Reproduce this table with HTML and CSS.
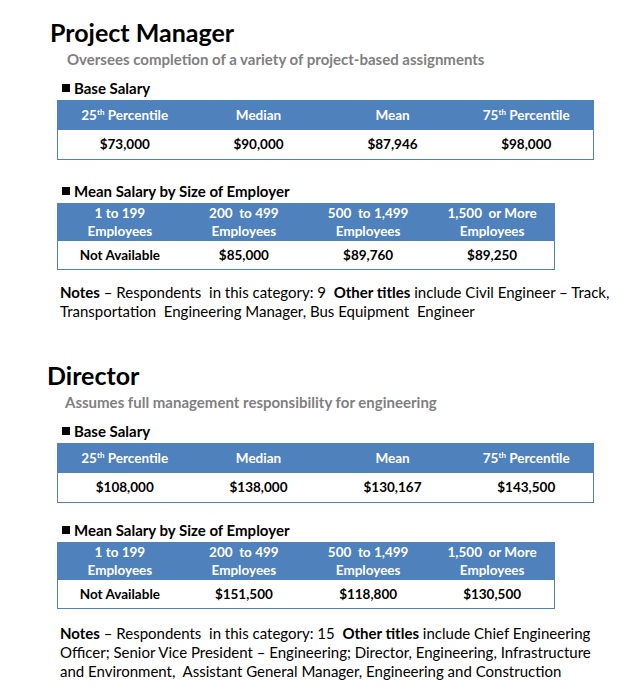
FILE: index.html
```html
<!DOCTYPE html>
<html>
<head>
<meta charset="utf-8">
<link rel="stylesheet" href="styles.css">
</head>
<body>
<div class="page">
  <section class="job job-pm">
    <h1 class="title">Project Manager</h1>
    <p class="subtitle">Oversees completion of a variety of project-based assignments</p>
    <h2 class="label"><span class="sq"></span>Base Salary</h2>
    <table class="tbl tbl-wide">
      <tr class="head"><th>25<sup>th</sup> Percentile</th><th>Median</th><th>Mean</th><th>75<sup>th</sup> Percentile</th></tr>
      <tr><td>$73,000</td><td>$90,000</td><td>$87,946</td><td>$98,000</td></tr>
    </table>
    <h2 class="label label-2"><span class="sq"></span>Mean Salary by Size of Employer</h2>
    <table class="tbl tbl-narrow">
      <tr class="head"><th>1 to 199<br>Employees</th><th>200&nbsp; to 499<br>Employees</th><th>500&nbsp; to 1,499<br>Employees</th><th>1,500&nbsp; or More<br>Employees</th></tr>
      <tr><td>Not Available</td><td>$85,000</td><td>$89,760</td><td>$89,250</td></tr>
    </table>
    <p class="notes"><b>Notes</b> – Respondents&nbsp; in this category: 9&nbsp; <b>Other titles</b> include Civil Engineer – Track, Transportation&nbsp; Engineering Manager, Bus Equipment&nbsp; Engineer</p>
  </section>

  <section class="job job-dir">
    <h1 class="title">Director</h1>
    <p class="subtitle">Assumes full management responsibility for engineering</p>
    <h2 class="label"><span class="sq"></span>Base Salary</h2>
    <table class="tbl tbl-wide">
      <tr class="head"><th>25<sup>th</sup> Percentile</th><th>Median</th><th>Mean</th><th>75<sup>th</sup> Percentile</th></tr>
      <tr><td>$108,000</td><td>$138,000</td><td>$130,167</td><td>$143,500</td></tr>
    </table>
    <h2 class="label label-2"><span class="sq"></span>Mean Salary by Size of Employer</h2>
    <table class="tbl tbl-narrow">
      <tr class="head"><th>1 to 199<br>Employees</th><th>200&nbsp; to 499<br>Employees</th><th>500&nbsp; to 1,499<br>Employees</th><th>1,500&nbsp; or More<br>Employees</th></tr>
      <tr><td>Not Available</td><td>$151,500</td><td>$118,800</td><td>$130,500</td></tr>
    </table>
    <p class="notes"><b>Notes</b> – Respondents&nbsp; in this category: 15&nbsp; <b>Other titles</b> include Chief Engineering Officer; Senior Vice President – Engineering; Director, Engineering, Infrastructure and Environment,&nbsp; Assistant General Manager, Engineering and Construction</p>
  </section>
</div>
</body>
</html>
```

FILE: styles.css
```css
* { box-sizing: border-box; }
html, body { margin: 0; padding: 0; background: #fff; }
body { font-family: Lato, "Open Sans", sans-serif; color: #000; }
.page { width: 640px; padding: 0; }
.job { padding-left: 57px; }
.job-pm { padding-top: 17px; }
.job-dir { padding-top: 39px; }
.title { margin: 0 0 0 -7px; font-size: 25px; font-weight: 700; line-height: 30px; }
.job-dir .title { margin-left: -10px; }
.subtitle { margin: 3px 0 0 10px; font-size: 15px; font-weight: 700; color: #7f7f7f; line-height: 18px; }
.job-dir .subtitle { margin-left: 8px; }
.label { margin: 11px 0 0 5px; font-size: 15px; font-weight: 700; line-height: 18px; display: flex; align-items: center; }
.label-2 { margin-top: 22px; }
.job-dir .label-2 { margin-top: 18px; }
.sq { display: inline-block; width: 8px; height: 8px; background: #000; margin-right: 4px; }
.tbl { border-collapse: collapse; table-layout: fixed; margin-top: 3px; border: 1px solid #4f81bd; }
.tbl-wide { width: 537px; }
.tbl-narrow { width: 498px; }
.tbl th { background: #4f81bd; color: #fff; font-weight: 700; font-size: 13.5px; text-align: center; padding: 0; }
.tbl td { font-weight: 700; font-size: 13.5px; text-align: center; padding: 0; background: #fff; }
.tbl-wide th { height: 29px; }
.tbl-wide td { height: 30px; }
.tbl-narrow th { height: 37px; line-height: 18px; }
.tbl-narrow td { height: 29px; }
sup { font-size: 8px; line-height: 0; vertical-align: 5px; }
.notes { margin: 13px 0 0 3px; font-size: 15px; line-height: 19px; width: 545px; }
.job-pm .notes { width: 562px; }
.job-dir .notes { margin-top: 15px; }
.notes b { font-weight: 700; }
```
